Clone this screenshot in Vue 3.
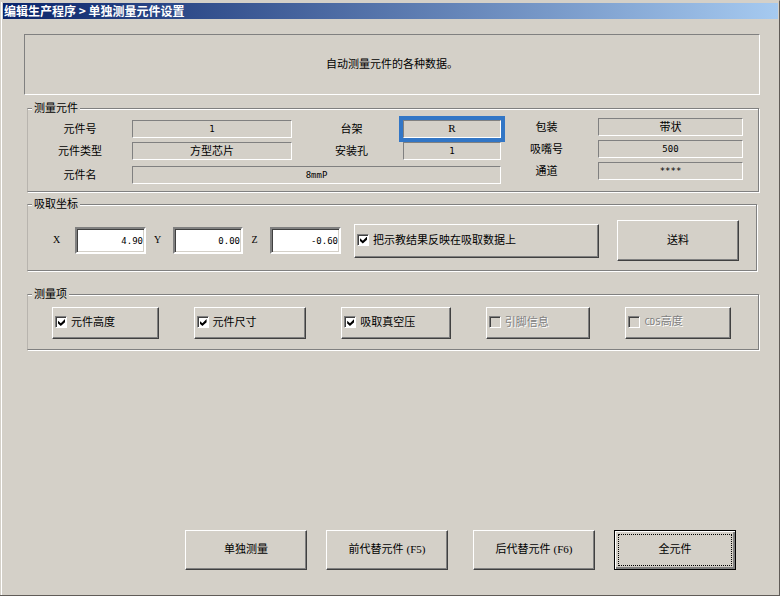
<script setup>
import { ref, reactive } from 'vue'

const coords = reactive([
  { axis: 'X', value: '4.90' },
  { axis: 'Y', value: '0.00' },
  { axis: 'Z', value: '-0.60' }
])
const reflect = ref(true)
const items = reactive([
  { latin: '', text: '元件高度', on: true, disabled: false },
  { latin: '', text: '元件尺寸', on: true, disabled: false },
  { latin: '', text: '吸取真空压', on: true, disabled: false },
  { latin: '', text: '引脚信息', on: false, disabled: true },
  { latin: 'CDS', text: '高度', on: false, disabled: true }
])
</script>

<template>
  <main class="window">
    <h1 class="title">编辑生产程序 &gt; 单独测量元件设置</h1>
    <div class="body">
      <p class="notice">自动测量元件的各种数据。</p>

      <fieldset class="group part">
        <legend>测量元件</legend>
        <div class="part-main">
          <label for="no">元件号</label>
          <output id="no" class="field latin">1</output>
          <label for="stage" class="second">台架</label>
          <output id="stage" class="field serif selected">R</output>
          <label for="type">元件类型</label>
          <output id="type" class="field">方型芯片</output>
          <label for="hole" class="second">安装孔</label>
          <output id="hole" class="field latin">1</output>
          <label for="name" class="last">元件名</label>
          <output id="name" class="field latin wide last">8mmP</output>
        </div>
        <div class="part-side">
          <label for="pack">包装</label>
          <output id="pack" class="field">带状</output>
          <label for="nozzle">吸嘴号</label>
          <output id="nozzle" class="field latin">500</output>
          <label for="channel">通道</label>
          <output id="channel" class="field latin">****</output>
        </div>
      </fieldset>

      <fieldset class="group pick">
        <legend>吸取坐标</legend>
        <div class="pick-row">
          <template v-for="c in coords" :key="c.axis">
            <label class="axis" :for="'axis-' + c.axis">{{ c.axis }}</label>
            <input :id="'axis-' + c.axis" v-model="c.value" class="number latin" type="text" />
          </template>
          <label class="bevel check reflect">
            <input v-model="reflect" type="checkbox" />
            <span class="caption">把示教结果反映在吸取数据上</span>
          </label>
          <button type="button" class="bevel feed">送料</button>
        </div>
      </fieldset>

      <fieldset class="group measure">
        <legend>测量项</legend>
        <div class="measure-row">
          <label
            v-for="item in items"
            :key="item.text"
            class="bevel check"
            :class="{ disabled: item.disabled }"
          >
            <input v-model="item.on" type="checkbox" :disabled="item.disabled" />
            <span class="caption"><span v-if="item.latin" class="latin">{{ item.latin }}</span>{{ item.text }}</span>
          </label>
        </div>
      </fieldset>

      <footer class="actions">
        <div class="pair">
          <button type="button" class="bevel">单独测量</button>
          <button type="button" class="bevel">前代替元件<span class="serif key">(F5)</span></button>
        </div>
        <div class="pair">
          <button type="button" class="bevel">后代替元件<span class="serif key">(F6)</span></button>
          <button type="button" class="bevel default">全元件</button>
        </div>
      </footer>
    </div>
  </main>
</template>

<style>
body {
  margin: 0;
  background: #d4d0c8;
}
</style>

<style scoped>
* {
  box-sizing: border-box;
}

.window {
  display: flex;
  flex-direction: column;
  min-height: 100vh;
  padding: 1px 1px 1px 2px;
  border: 1px solid #d4d0c8;
  border-right-color: #605c58;
  border-bottom-color: #605c58;
  border-left: 0;
  background: #d4d0c8;
  box-shadow: inset 1px 1px 0 #d4d0c8, inset 2px 1px 0 #fff;
  color: #000;
  font: 11px/14px "Noto Sans CJK SC", sans-serif;
}

.latin {
  font-family: "DejaVu Sans Mono", monospace;
  font-size: 9px;
}

.serif {
  font-family: "Liberation Serif", serif;
  font-size: 11px;
}

.title {
  margin: 1px 0 0 1px;
  padding-left: 1px;
  background: linear-gradient(90deg, #0a246a, #a6caf0);
  color: #fff;
  font-size: 12px;
  font-weight: 700;
  line-height: 16px;
}

.body {
  display: flex;
  flex: 1;
  flex-direction: column;
  padding: 15px 18px 24px 25px;
}

.notice {
  display: flex;
  align-items: center;
  justify-content: center;
  height: 61px;
  margin: 0 0 5px -3px;
  padding-bottom: 3px;
  border: 1px solid #808080;
  border-right-color: #fff;
  border-bottom-color: #fff;
}

.group {
  min-width: 0;
  margin: 0 1px 0 0;
  padding: 0;
  border: 1px solid #808080;
  border-left-color: #b8b4ae;
  box-shadow: inset 0 1px 0 #fff, 1px 1px 0 #fff;
}

.group legend {
  margin-left: 4px;
  padding: 0 2px 2px;
  background: #d4d0c8;
}

.part {
  display: grid;
  grid-template-columns: 473fr 257fr;
  padding: 2px 0 7px;
}

.part-main,
.part-side {
  display: grid;
  grid-auto-rows: min-content;
  row-gap: 4px;
  text-align: center;
}

.part-main {
  grid-template-columns: 104fr 160fr 111fr 98fr;
  padding-top: 2px;
}

.part-side {
  grid-template-columns: 97fr 145fr;
  padding-right: 15px;
}

.part label {
  line-height: 16px;
}

.part-side label {
  padding-right: 6px;
}

.second {
  padding-left: 8px;
}

.wide {
  grid-column: span 3;
}

.last {
  margin-top: 2px;
}

.field {
  height: 18px;
  border: 1px solid #808080;
  border-right-color: #fff;
  border-bottom-color: #fff;
  line-height: 15px;
}

.field.latin {
  line-height: 16px;
}

.selected {
  outline: 4px solid #3276c6;
}

.pick {
  margin-top: 4px;
  margin-right: 3px;
}

.pick-row {
  display: grid;
  grid-template-columns: 47fr 71fr 27fr 70fr 27fr 71fr 258fr 140fr;
  align-items: center;
  padding: 8px 17px 9px 0;
}

.axis {
  padding: 0 4px 2px 0;
  font-family: "Liberation Serif", serif;
  font-size: 10px;
  text-align: center;
}

.axis:first-child {
  padding-right: 0;
  padding-left: 10px;
}

.number {
  width: 100%;
  min-width: 0;
  height: 27px;
  padding: 0 1px;
  border: 2px solid #808080;
  border-right-color: #fff;
  border-bottom-color: #fff;
  border-radius: 0;
  background: #fff;
  box-shadow: inset 1px 1px 0 #404040, inset -1px -1px 0 #d4d0c8;
  color: #000;
  outline: 0;
  text-align: right;
}

.bevel {
  border: 1px solid #fff;
  border-right-color: #404040;
  border-bottom-color: #404040;
  border-radius: 0;
  background: #d4d0c8;
  box-shadow: inset -1px -1px 0 #808080;
  color: #000;
  font: inherit;
}

.check {
  display: flex;
  gap: 4px;
  align-items: center;
  height: 32px;
  padding: 0 2px 2px;
  white-space: nowrap;
}

.caption {
  padding-bottom: 2px;
}

.check input {
  position: relative;
  flex: none;
  width: 12px;
  height: 12px;
  margin: 0;
  appearance: none;
  border: 1px solid #808080;
  border-right-color: #fff;
  border-bottom-color: #fff;
  background: #fff;
  box-shadow: inset 1px 1px 0 #404040;
}

.check input:checked::after {
  position: absolute;
  inset: 2px 1px 1px 2px;
  background: #000;
  clip-path: polygon(0 25%, 40% 60%, 100% 0, 100% 45%, 40% 100%, 0 65%);
  content: "";
}

.reflect {
  height: 34px;
  margin-left: 13px;
}

.disabled {
  color: #808080;
  text-shadow: 1px 1px 0 #fff;
}

.check.disabled input {
  background: #d4d0c8;
}

.feed {
  height: 41px;
  margin-left: 18px;
  padding: 0 0 4px;
}

.measure {
  margin-top: 15px;
}

.measure-row {
  display: grid;
  grid-template-columns: 107fr 113fr 110fr 105fr 106fr;
  gap: 35px;
  padding: 5px 27px 10px 24px;
}

.actions {
  display: flex;
  gap: 25px;
  justify-content: flex-end;
  margin-top: auto;
  padding-right: 24px;
}

.pair {
  display: flex;
  gap: 19px;
}

.actions .bevel {
  width: 122px;
  height: 40px;
  padding: 0 0 4px;
  white-space: nowrap;
}

.key {
  margin-left: 3px;
}

.actions .default {
  border-color: #000;
  outline: 1px dotted #000;
  outline-offset: -5px;
  box-shadow: inset 1px 1px 0 #fff, inset -2px -2px 0 #808080;
}
</style>
